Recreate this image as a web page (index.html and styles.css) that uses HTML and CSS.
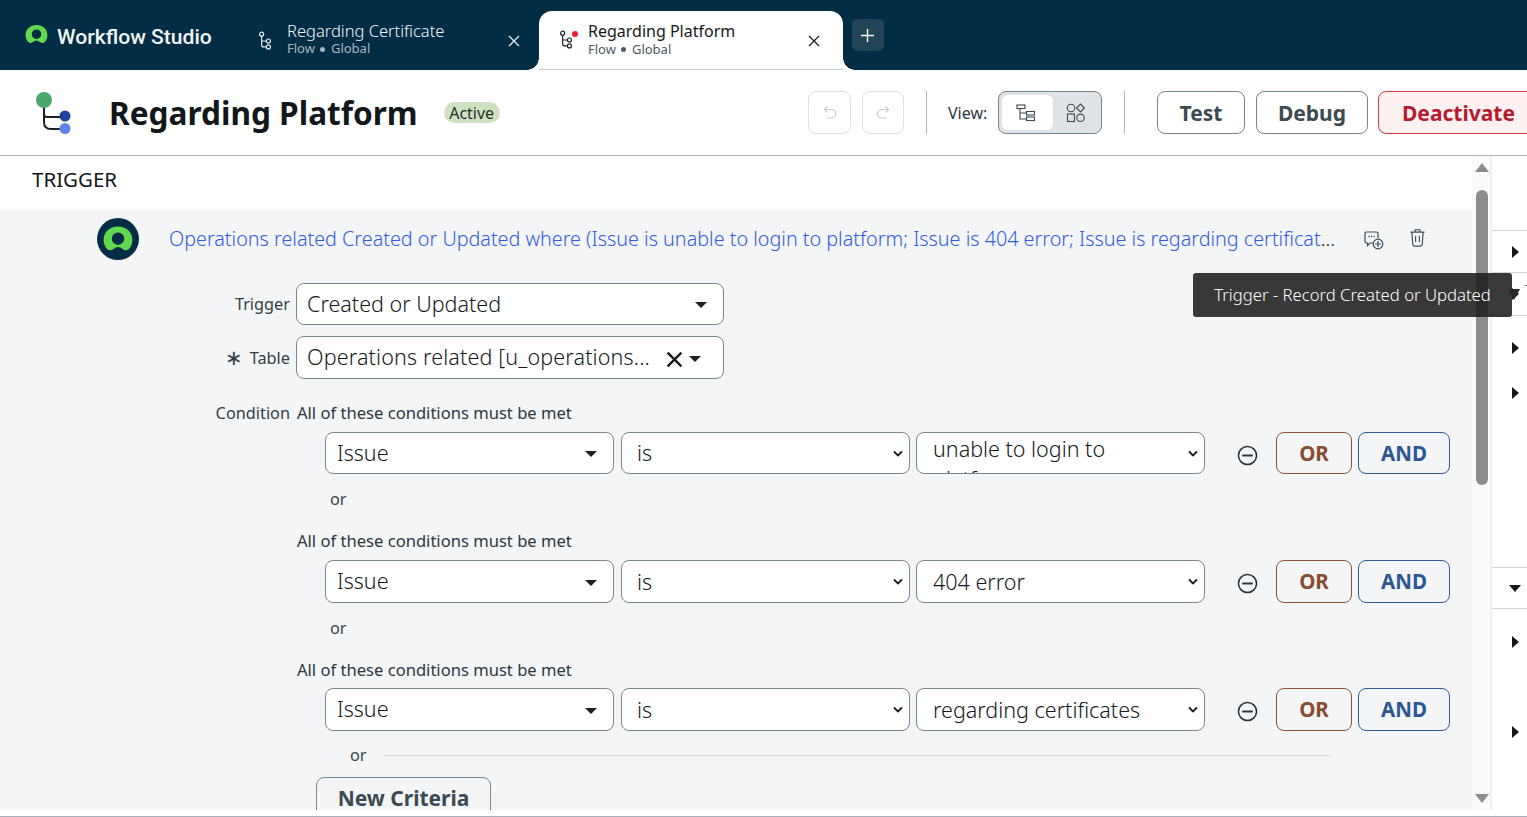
FILE: index.html
```html
<!DOCTYPE html>
<html lang="en">
<head>
<meta charset="utf-8">
<title>Workflow Studio</title>
<link rel="stylesheet" href="styles.css">
</head>
<body>
<header class="topbar">
  <div class="brand">
    <svg class="brand-logo" viewBox="0 0 24 20"><path fill="#62d84e" fill-rule="evenodd" d="M12 0C5.400 0 .5 4.600.5 10.500c0 4 2.200 8.500 5.400 8.500 2.200 0 3.400-2.600 6.100-2.600s3.900 2.600 6.100 2.600c3.200 0 5.400-4.500 5.400-8.500C23.500 4.600 18.600 0 12 0ZM12 4.700a5 5 0 1 0 0 10 5 5 0 0 0 0-10Z"/></svg>
    <span class="brand-name">Workflow Studio</span>
  </div>
  <div class="tab">
    <svg class="tab-icon" viewBox="0 0 16 22"><g fill="none" stroke="currentColor" stroke-width="1.300"><circle cx="4" cy="3.500" r="2.200"/><circle cx="11.500" cy="11" r="2.200"/><circle cx="11.500" cy="17.500" r="2.200"/><path d="M4 5.700V15c0 1.500 1 2.500 2.500 2.500h2.800M4 11h5.300"/></g></svg>
    <div class="tab-text"><span class="tab-title">Regarding Certificate</span><span class="tab-sub">Flow <i class="sep"></i> Global</span></div>
    <svg class="tab-close" viewBox="0 0 12 12"><path d="M1 1l10 10M11 1L1 11" stroke="currentColor" stroke-width="1.300"/></svg>
  </div>
  <div class="tab tab-active">
    <span class="tab-icon-wrap">
      <svg class="tab-icon" viewBox="0 0 16 22"><g fill="none" stroke="currentColor" stroke-width="1.300"><circle cx="4" cy="3.500" r="2.200"/><circle cx="11.500" cy="11" r="2.200"/><circle cx="11.500" cy="17.500" r="2.200"/><path d="M4 5.700V15c0 1.500 1 2.500 2.500 2.500h2.800M4 11h5.300"/></g></svg>
      <span class="unsaved-dot"></span>
    </span>
    <div class="tab-text"><span class="tab-title">Regarding Platform</span><span class="tab-sub">Flow <i class="sep"></i> Global</span></div>
    <svg class="tab-close" viewBox="0 0 12 12"><path d="M1 1l10 10M11 1L1 11" stroke="currentColor" stroke-width="1.300"/></svg>
  </div>
  <button class="tab-add"><svg viewBox="0 0 12 12"><path d="M6 0v12M0 6h12" stroke="currentColor" stroke-width="1.300"/></svg></button>
</header>

<section class="toolbar">
  <svg class="flow-logo" viewBox="0 0 36 42"><path d="M8 14v16c0 5 2 7 7 7h13M8 22c0 2 1 3 3 3h17" fill="none" stroke="#1a2227" stroke-width="2"/><circle cx="8" cy="8" r="8" fill="#4da66c"/><circle cx="29" cy="24" r="5.500" fill="#1f439e"/><circle cx="29" cy="36.500" r="5.500" fill="#5b86e8"/></svg>
  <h1 class="flow-title">Regarding Platform</h1>
  <span class="badge">Active</span>
  <div class="actions">
    <button class="icon-btn undo"><svg viewBox="0 0 16 16"><path d="M5.500 1.500L2.500 4.500l3 3M3 4.500h6.500a4 4 0 0 1 0 8.500H4.500" fill="none" stroke="#c6cbce" stroke-width="1.200"/></svg></button>
    <button class="icon-btn redo"><svg viewBox="0 0 16 16"><path d="M10.500 1.500l3 3-3 3M13 4.500H6.500a4 4 0 0 0 0 8.500h5" fill="none" stroke="#c6cbce" stroke-width="1.200"/></svg></button>
    <span class="divider div-a"></span>
    <span class="view-label">View:</span>
    <div class="view-toggle">
      <span class="view-opt view-on"><svg viewBox="0 0 20 18"><g fill="none" stroke="#3e4a50" stroke-width="1.100"><rect x="1" y="1" width="8" height="3.500"/><rect x="10.500" y="7.500" width="8" height="3.500"/><rect x="10.500" y="13" width="8" height="3.500"/><path d="M4 4.500v10.500h6.500M4 9h6.500"/></g></svg></span>
      <span class="view-opt view-off"><svg viewBox="0 0 20 20"><g fill="none" stroke="#3e4a50" stroke-width="1.100"><circle cx="5" cy="5" r="3.800"/><path d="M14.500 1l3.900 4-3.900 4-3.900-4z"/><rect x="1.500" y="11" width="7" height="7.500"/><circle cx="14.500" cy="14.800" r="3.700"/></g></svg></span>
    </div>
    <span class="divider div-b"></span>
    <button class="btn btn-test">Test</button>
    <button class="btn btn-debug">Debug</button>
    <button class="btn btn-danger">Deactivate</button>
  </div>
</section>

<main class="workspace">
  <div class="canvas">
    <h2 class="section-title">TRIGGER</h2>
    <div class="panel">
      <div class="summary">
        <span class="trigger-badge"><svg viewBox="0 0 24 20"><path fill="#62d84e" fill-rule="evenodd" d="M12 0C5.400 0 .5 4.600.5 10.500c0 4 2.200 8.500 5.400 8.500 2.200 0 3.400-2.600 6.100-2.600s3.900 2.600 6.100 2.600c3.200 0 5.400-4.500 5.400-8.500C23.500 4.600 18.600 0 12 0ZM12 4.700a5 5 0 1 0 0 10 5 5 0 0 0 0-10Z"/></svg></span>
        <a class="summary-text"><span class="summary-link">Operations related Created or Updated where (Issue is unable to login to platform; Issue is 404 error; Issue is regarding certificat</span>...</a>
        <svg class="row-icon add-note" viewBox="0 0 20 20"><g fill="none" stroke="#3e4a50" stroke-width="1.200"><path d="M9 13H6l-2.500 2.500V13H2.500A1.500 1.500 0 0 1 1 11.500v-8A1.500 1.500 0 0 1 2.500 2h10A1.500 1.500 0 0 1 14 3.500V8"/><circle cx="14" cy="14" r="4.800"/><path d="M14 11v6M11 14h6"/></g><path d="M4.500 6.500h1.200M7 6.500h1.200M9.500 6.500h1.200" stroke="#3e4a50" stroke-width="1.500"/></svg>
        <svg class="row-icon trash" viewBox="0 0 18 20"><g fill="none" stroke="#3e4a50" stroke-width="1.200"><path d="M1.500 4h15M6.500 4V1.500h5V4M3 4l1 13c0 1 .8 1.800 1.800 1.800h6.400c1 0 1.800-.8 1.800-1.800l1-13M7 8v6.500M11 8v6.500"/></g></svg>
      </div>

      <div class="field">
        <span class="field-label">Trigger</span>
        <div class="combo">Created or Updated<i class="caret"></i></div>
      </div>
      <div class="field field-table">
        <span class="field-label"><span class="required">∗</span> Table</span>
        <div class="combo combo-tall"><span class="combo-val">Operations related [u_operations...</span><svg class="clear" viewBox="0 0 16 16"><path d="M1.500 1.500l13 13M14.500 1.500l-13 13" stroke="#15191c" stroke-width="2.200"/></svg><i class="caret caret-tight"></i></div>
      </div>

      <div class="condition-block">
        <span class="field-label cond-label">Condition</span>
        <div class="groups">
          <div class="group">
            <div class="group-head">All of these conditions must be met</div>
            <div class="cond-row">
              <div class="sel sel-field">Issue<i class="caret"></i></div>
              <div class="sel sel-op"><span class="op-text">is</span><svg class="chev" viewBox="0 0 10 6"><path d="M1 1l4 4 4-4" fill="none" stroke="#1a1f22" stroke-width="1.800"/></svg></div>
              <div class="sel sel-val sel-wrap"><span class="wrap-text">unable to login to platform</span><svg class="chev" viewBox="0 0 10 6"><path d="M1 1l4 4 4-4" fill="none" stroke="#1a1f22" stroke-width="1.800"/></svg></div>
              <svg class="minus" viewBox="0 0 22 22"><circle cx="11" cy="11" r="9.500" fill="none" stroke="#27343a" stroke-width="1.600"/><path d="M5.500 11h11" stroke="#27343a" stroke-width="2"/></svg>
              <button class="logic logic-or">OR</button>
              <button class="logic logic-and">AND</button>
            </div>
            <div class="or-line">or</div>
          </div>
          <div class="group">
            <div class="group-head">All of these conditions must be met</div>
            <div class="cond-row">
              <div class="sel sel-field">Issue<i class="caret"></i></div>
              <div class="sel sel-op"><span class="op-text">is</span><svg class="chev" viewBox="0 0 10 6"><path d="M1 1l4 4 4-4" fill="none" stroke="#1a1f22" stroke-width="1.800"/></svg></div>
              <div class="sel sel-val"><span class="val-text">404 error</span><svg class="chev" viewBox="0 0 10 6"><path d="M1 1l4 4 4-4" fill="none" stroke="#1a1f22" stroke-width="1.800"/></svg></div>
              <svg class="minus" viewBox="0 0 22 22"><circle cx="11" cy="11" r="9.500" fill="none" stroke="#27343a" stroke-width="1.600"/><path d="M5.500 11h11" stroke="#27343a" stroke-width="2"/></svg>
              <button class="logic logic-or">OR</button>
              <button class="logic logic-and">AND</button>
            </div>
            <div class="or-line">or</div>
          </div>
          <div class="group">
            <div class="group-head">All of these conditions must be met</div>
            <div class="cond-row">
              <div class="sel sel-field">Issue<i class="caret"></i></div>
              <div class="sel sel-op"><span class="op-text">is</span><svg class="chev" viewBox="0 0 10 6"><path d="M1 1l4 4 4-4" fill="none" stroke="#1a1f22" stroke-width="1.800"/></svg></div>
              <div class="sel sel-val"><span class="val-text">regarding certificates</span><svg class="chev" viewBox="0 0 10 6"><path d="M1 1l4 4 4-4" fill="none" stroke="#1a1f22" stroke-width="1.800"/></svg></div>
              <svg class="minus" viewBox="0 0 22 22"><circle cx="11" cy="11" r="9.500" fill="none" stroke="#27343a" stroke-width="1.600"/><path d="M5.500 11h11" stroke="#27343a" stroke-width="2"/></svg>
              <button class="logic logic-or">OR</button>
              <button class="logic logic-and">AND</button>
            </div>
            <div class="or-rule"><span>or</span><i></i></div>
          </div>
          <button class="new-criteria">New Criteria</button>
        </div>
      </div>
    </div>
  </div>

  <div class="scrollbar">
    <i class="scroll-up"></i>
    <i class="scroll-thumb"></i>
    <i class="scroll-down"></i>
  </div>

  <aside class="rail">
    <div class="rail-row r1"><i class="tri"></i></div>
    <div class="rail-row r2"><i class="tri"></i><span class="rail-t">T</span></div>
    <div class="rail-row r3"><i class="tri"></i></div>
    <div class="rail-row r4"><i class="tri"></i></div>
    <div class="rail-row r5"><i class="tri-down"></i></div>
    <div class="rail-row r6"><i class="tri"></i></div>
    <div class="rail-row r7"><i class="tri"></i></div>
  </aside>

  <div class="tooltip">Trigger - Record Created or Updated</div>
</main>
</body>
</html>
```
FILE: styles.css
```css
* { box-sizing: border-box; }
html, body { margin: 0; height: 817px; overflow: hidden; background: #fff; }
body { font-family: "Noto Sans", "Open Sans", sans-serif; color: #15191c; border-bottom: 1px solid #a9b1b6; }
button { font-family: inherit; cursor: pointer; }

/* top bar */
.topbar { height: 70px; background: #032d44; display: flex; align-items: flex-end; color: #fff; }
.brand { display: flex; align-items: center; width: 240px; height: 70px; padding-left: 25px; }
.brand-logo { width: 23px; height: 19px; margin-right: 9px; margin-top: -1px; }
.brand-name { font-family: Roboto, "Noto Sans", sans-serif; font-weight: 500; font-size: 21.100px; margin-top: 2px; color: #f2f5f6; }
.tab { display: flex; align-items: center; width: 299px; height: 59px; position: relative; padding-left: 18px; color: #e6eaec; }
.tab-icon { width: 14.500px; height: 20px; display: block; }
.tab > .tab-icon { margin-right: 14.500px; }
.tab-text { display: flex; flex-direction: column; flex: 1; margin-bottom: 5px; }
.tab-title { font-size: 16.500px; line-height: 21px; font-weight: 300; color: #f4f6f7; }
.tab-sub { font-size: 13px; line-height: 15px; color: #a9b6bd; display: flex; align-items: center; }
.sep { width: 5px; height: 5px; border-radius: 50%; background: currentColor; margin: 1px 6px 0 5px; }
.tab-close { width: 12px; height: 12px; margin-right: 19px; margin-top: 1px; }
.tab-active { width: 304px; margin-right: 9px; background: #fff; border-radius: 13px 13px 0 0; color: #1c2226; border-bottom: 1px solid #c4cace; padding-left: 20px; }
.tab-active::before, .tab-active::after { content: ""; position: absolute; bottom: -1px; width: 12px; height: 12px; }
.tab-active::before { left: -12px; background: radial-gradient(circle at 0 0, #032d44 11.500px, #fff 12px); }
.tab-active::after { right: -12px; background: radial-gradient(circle at 100% 0, #032d44 11.500px, #fff 12px); }
.tab-active .tab-text { margin-bottom: 3px; }
.tab-active .tab-title { color: #15191c; font-weight: 400; font-size: 16px; }
.tab-active .tab-sub { color: #4f5b62; }
.tab-icon-wrap { position: relative; margin-right: 14.500px; display: block; }
.unsaved-dot { position: absolute; left: 13px; top: 1px; width: 6px; height: 6px; border-radius: 50%; background: #e8203a; }
.tab-active .tab-close { margin-right: 23px; }
.tab-add { align-self: flex-start; position: relative; margin-top: 19px; width: 32px; height: 32px; border: 0; border-radius: 6px; background: #214457; color: #fff; padding: 9.500px 9px; display: flex; }
.tab-add svg { width: 13px; height: 13px; }

/* toolbar */
.toolbar { height: 86px; border-bottom: 1px solid #a9b1b6; display: flex; align-items: center; padding-left: 36px; }
.flow-logo { width: 36px; height: 42px; margin-right: 37px; }
.flow-title { margin: 0 26px 0 0; font-size: 31.600px; font-weight: 700; line-height: 40px; color: #11171b; white-space: nowrap; }
.badge { background: #d0e1c2; color: #23302a; border-radius: 11px; height: 21px; width: 56px; display: flex; align-items: center; justify-content: center; font-size: 16px; }
.actions { position: absolute; left: 808px; top: 91px; height: 43px; display: flex; align-items: center; }
.icon-btn { height: 43px; border: 1px solid #dde0e2; border-radius: 8px; background: #fff; padding: 0; display: flex; align-items: center; justify-content: center; }
.icon-btn svg { width: 16px; height: 16px; }
.undo { width: 43px; margin-right: 11px; }
.redo { width: 42px; margin-right: 22px; }
.divider { width: 1px; height: 43px; background: #b0b7bb; }
.view-label { margin: 0 11px 0 21px; font-size: 16px; width: 39px; color: #2b363c; white-space: nowrap; }
.view-toggle { width: 104px; height: 43px; background: #dfe3e5; border: 1px solid #78858c; border-radius: 8px; display: flex; padding: 3px; }
.view-opt { border-radius: 6px; display: flex; align-items: center; justify-content: center; flex: none; }
.view-on { width: 51px; background: #fff; padding-right: 4px; }
.view-off { width: 45px; }
.view-opt svg { width: 20px; height: 20px; }
.div-b { margin: 0 32px 0 22px; }
.btn { height: 43px; border-radius: 8px; background: #fff; border: 1px solid #78858c; color: #3c4a52; font-size: 21px; font-weight: 700; padding: 0; margin-right: 11px; flex: none; }
.btn-test { width: 88px; }
.btn-debug { width: 112px; margin-right: 10px; }
.btn-danger { width: 170px; background: #fdf1f1; border-color: #d83a4b; color: #b51c2f; text-align: left; padding-left: 23px; margin-right: 0; }

/* workspace */
.workspace { height: 660px; display: flex; position: relative; overflow: hidden; }
.canvas { width: 1472px; flex: none; height: 654px; overflow: hidden; }
.section-title { margin: 0; height: 54px; padding: 8px 0 0 32px; font-size: 20.500px; font-weight: 400; line-height: 30px; color: #11171b; }
.panel { background: #f4f5f7; height: 600px; overflow: hidden; padding-top: 8px; }
.summary { display: flex; align-items: center; height: 42px; padding-left: 97px; }
.trigger-badge { width: 42px; height: 42px; border-radius: 50%; background: #032d44; display: flex; align-items: center; justify-content: center; flex: none; margin-right: 30px; }
.trigger-badge svg { width: 30px; height: 26px; }
.summary-text { width: 1170px; font-size: 19.750px; line-height: 26px; white-space: nowrap; overflow: hidden; color: #11171b; flex: none; font-weight: 300; }
.summary-link { color: #2f5be6; }
.row-icon { flex: none; }
.add-note { width: 20px; height: 20px; margin-left: 25px; margin-top: 1px; }
.trash { width: 17px; height: 19.500px; margin-left: 25px; margin-top: -3px; }

.field { display: flex; align-items: center; margin-top: 23px; }
.field-table { margin-top: 11px; }
.field-label { width: 290px; text-align: right; font-size: 16.300px; color: #333e44; flex: none; }
.required { font-size: 21px; line-height: 16px; vertical-align: -1px; margin-right: 2px; }
.combo { margin-left: 6px; width: 428px; height: 42px; border: 1px solid #7b878e; border-radius: 8px; background: #fff; display: flex; align-items: center; padding: 0 0 2px 10px; font-size: 21.500px; font-weight: 300; position: relative; color: #15191c; }
.combo-tall { height: 43px; }
.combo-val { white-space: nowrap; letter-spacing: .15px; }
.caret { position: absolute; right: 16px; top: 50%; margin-top: -2px; border: 6px solid transparent; border-top: 6px solid #1a1f22; border-bottom: 0; width: 0; height: 0; border-left-width: 6.500px; border-right-width: 6.500px; }
.caret-tight { right: 22px; }
.clear { position: absolute; left: 369px; top: 14px; width: 17px; height: 17px; }

.condition-block { display: flex; margin-top: 22px; }
.cond-label { line-height: 24px; }
.groups { margin-left: 7px; flex: 1; }
.group-head { font-size: 16.580px; line-height: 24px; height: 24px; color: #2d383e; }
.cond-row { display: flex; align-items: center; margin-top: 7px; padding-left: 28px; height: 43px; }
.group:first-child .cond-row { height: 42px; }
.group:first-child .op-text { margin-top: 0; }
.group:first-child .minus { margin-top: 4px; }
.sel { height: 100%; width: 289px; border: 1px solid #7b878e; border-radius: 8px; background: #fff; position: relative; display: flex; align-items: center; padding: 0 0 2px 11px; font-size: 21.500px; font-weight: 300; margin-right: 7px; flex: none; overflow: hidden; color: #15191c; }
.sel-op { margin-right: 6px; padding-left: 15px; }
.sel-val { padding-left: 16px; margin-right: 0; }
.op-text, .val-text { margin-top: 2px; }
.sel-wrap { align-items: flex-start; }
.wrap-text { width: 200px; line-height: 30px; margin-top: 1px; }
.chev { position: absolute; right: 6px; top: 17px; width: 10px; height: 7px; }
.minus { width: 21px; height: 21px; margin-left: 32px; margin-top: 3px; flex: none; }
.logic { height: 100%; background: transparent; border-radius: 8px; font-size: 20.500px; font-weight: 700; padding: 0 0 1px; flex: none; }
.logic-or { width: 76px; margin-left: 18px; margin-right: 6px; border: 1px solid #8f5034; color: #8a4b2f; }
.logic-and { width: 92px; border: 1px solid #2e5a96; color: #2c5794; }
.or-line { font-size: 16.300px; color: #3b464c; padding-left: 33px; height: 54px; line-height: 50px; }
.group:first-child .or-line { height: 55px; line-height: 50px; }
.group:nth-child(3) .group-head { padding-top: 1px; }
.or-rule { display: flex; align-items: center; height: 46px; padding: 2px 0 0 53px; font-size: 16.300px; color: #3b464c; }
.or-rule i { flex: none; width: 947px; height: 1px; background: #d3d6d9; margin-left: 17px; }
.new-criteria { display: block; margin: 0 0 0 19px; width: 175px; height: 42px; border: 1px solid #7b878e; border-radius: 8px; background: transparent; font-size: 21px; font-weight: 700; color: #3c4a52; padding: 0; }

/* scrollbar + rail */
.scrollbar { width: 20px; height: 654px; flex: none; background: #fafafa; position: relative; border-right: 2px solid #eef0f1; display: flex; flex-direction: column; align-items: center; padding-left: 2px; }
.scroll-up { margin-top: 7px; border: 7px solid transparent; border-bottom: 9px solid #8d8d8d; border-top: 0; }
.scroll-thumb { width: 12px; height: 295px; margin-top: 18px; border-radius: 6px; background: #8d8d8d; }
.scroll-down { margin-top: auto; margin-bottom: 7px; border: 7px solid transparent; border-top: 9px solid #8d8d8d; border-bottom: 0; }
.rail { flex: 1; position: relative; }
.rail-row { display: flex; align-items: center; padding-left: 20px; border-top: 1px solid transparent; position: relative; }
.r1 { margin-top: 74px; height: 42px; border-top-color: #d3d6d9; }
.r2 { height: 43px; border-top-color: #d3d6d9; }
.r3 { height: 65px; border-top-color: #d3d6d9; }
.r4 { height: 25px; }
.r5 { margin-top: 162px; height: 42px; border-top-color: #d3d6d9; border-bottom: 1px solid #d3d6d9; padding-left: 17px; }
.r6 { height: 64px; }
.r7 { margin-top: 25px; height: 66px; }
.tri { border: 6px solid transparent; border-left: 7px solid #15191c; border-right: 0; }
.tri-down { border: 6px solid transparent; border-top: 7px solid #15191c; border-bottom: 0; }
.rail-t { position: absolute; left: 33px; top: 7px; font-size: 16px; font-weight: 300; }

.tooltip { position: absolute; left: 1193px; top: 117px; width: 319px; height: 44px; border-radius: 3px; background: rgba(30, 30, 30, .88); color: #fff; font-size: 16.700px; font-weight: 300; display: flex; align-items: center; justify-content: center; padding-bottom: 1px; }
.tooltip::after { content: ""; position: absolute; right: -8px; top: 16px; border: 6px solid transparent; border-top: 11px solid #26282a; border-bottom: 0; }
```
